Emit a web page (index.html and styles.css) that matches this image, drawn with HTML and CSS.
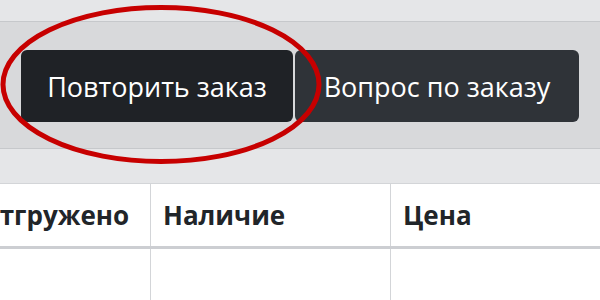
FILE: index.html
```html
<!DOCTYPE html>
<html lang="ru">
<head>
  <meta charset="UTF-8" />
  <meta name="viewport" content="width=device-width, initial-scale=1.0" />
  <title>Заказ</title>
  <link rel="stylesheet" href="styles.css">
</head>
<body>
  <div class="page">
    <div class="topbar"></div>

    <div class="toolbar">
      <button class="btn btn-dark">Повторить заказ</button>
      <button class="btn btn-gray">Вопрос по заказу</button>
    </div>

    <div class="spacer"></div>

    <div class="table-wrap">
      <table class="goods">
        <colgroup>
          <col class="c-ship">
          <col class="c-stock">
          <col class="c-price">
        </colgroup>
        <thead>
          <tr>
            <th>Отгружено</th>
            <th>Наличие</th>
            <th>Цена</th>
          </tr>
        </thead>
        <tbody>
          <tr>
            <td></td>
            <td></td>
            <td></td>
          </tr>
        </tbody>
      </table>
    </div>

    <svg class="mark" width="330" height="175" viewBox="0 0 330 175">
      <ellipse cx="161" cy="84.5" rx="158" ry="77" fill="none" stroke="#c70000" stroke-width="5" />
    </svg>
  </div>
</body>
</html>
```

FILE: styles.css
```css
body {
  margin: 0;
  font-family: "Open Sans", "Noto Sans", sans-serif;
  color: #212529;
  background: #ffffff;
}

.page {
  position: relative;
  width: 600px;
  height: 300px;
  overflow: hidden;
}

.topbar {
  height: 21px;
  background: #e5e6e8;
  border-bottom: 1px solid #c6c8cb;
}

.toolbar {
  display: flex;
  gap: 2px;
  padding: 28px 21px 26px;
  background: #d8d9db;
  border-bottom: 1px solid #c6c8cb;
}

.btn {
  height: 72px;
  border: none;
  border-radius: 6px;
  color: #ffffff;
  font-family: inherit;
  font-size: 27px;
  padding: 0;
  white-space: nowrap;
  text-align: center;
  cursor: pointer;
}

.btn-dark {
  width: 272px;
  background: #1f2226;
}

.btn-gray {
  width: 284px;
  background: #2f3338;
}

.spacer {
  height: 34px;
  background: #e5e6e8;
}

.table-wrap {
  overflow: hidden;
}

.goods {
  margin-left: -34px;
  border-collapse: collapse;
  table-layout: fixed;
  width: 664px;
}

.c-ship { width: 184px; }
.c-stock { width: 240px; }
.c-price { width: 240px; }

.goods th,
.goods td {
  border: 1px solid #d3d5d8;
  padding: 0 12px;
  text-align: left;
}

.goods th {
  height: 62px;
  font-size: 26px;
  font-weight: 700;
  border-bottom: 3px solid #ccced2;
}

.goods td {
  height: 60px;
}

.mark {
  position: absolute;
  left: 0;
  top: 0;
}
```
